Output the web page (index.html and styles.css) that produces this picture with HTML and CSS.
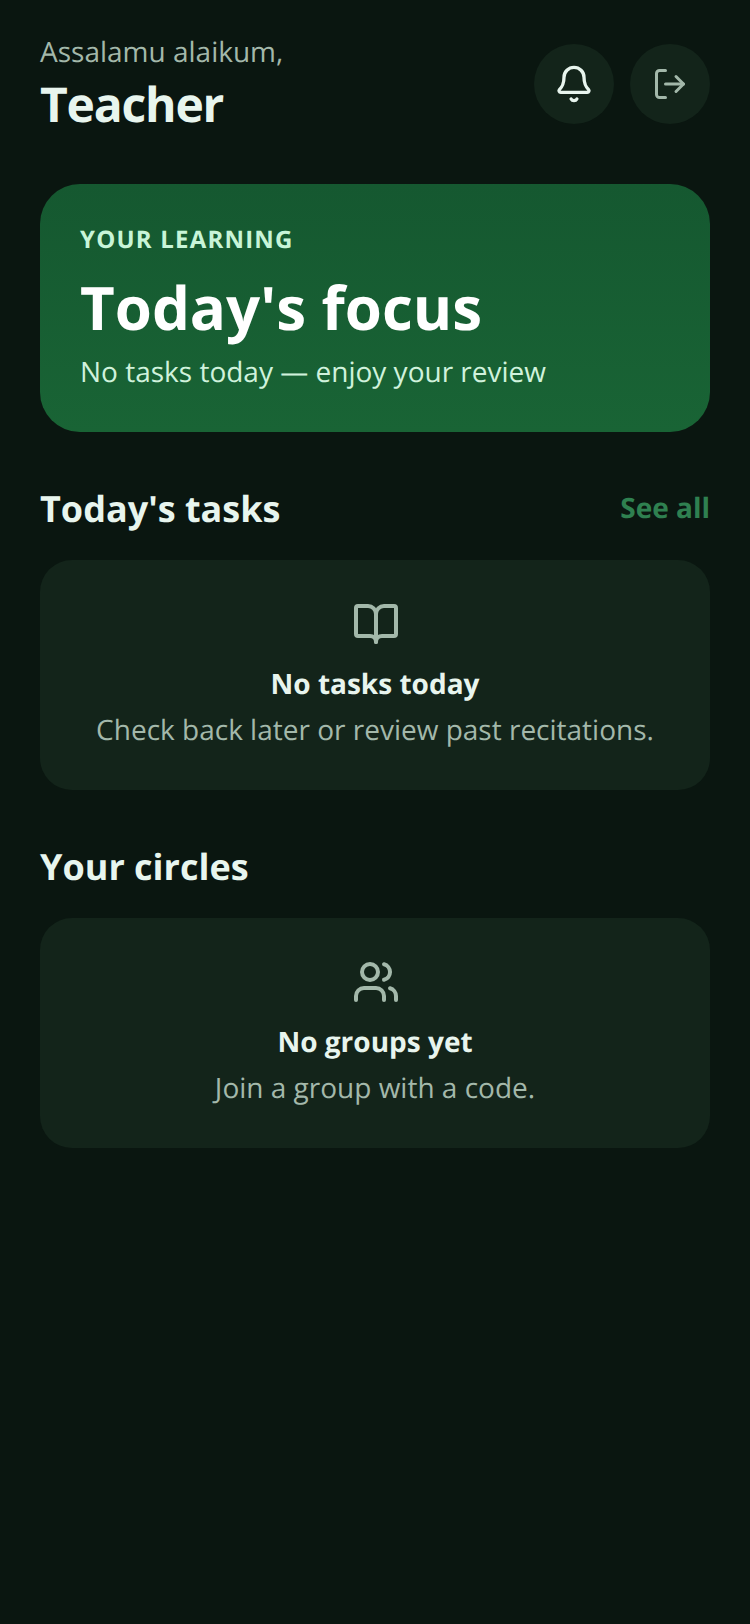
FILE: index.html
```html
<!DOCTYPE html>
<html lang="en">
<head>
  <meta charset="UTF-8">
  <meta name="viewport" content="width=device-width, initial-scale=1.0">
  <title>Home</title>
  <link rel="stylesheet" href="styles.css">
</head>
<body>
  <main class="page">
    <header class="top">
      <div class="hello">
        <p class="greeting">Assalamu alaikum,</p>
        <h1 class="name">Teacher</h1>
      </div>
      <div class="top-actions">
        <button class="round-btn" type="button" aria-label="Notifications">
          <svg class="icon-bell" viewBox="0 0 24 24" fill="none" stroke="currentColor" stroke-width="2" stroke-linecap="round" stroke-linejoin="round">
            <path d="M10.268 21a2 2 0 0 0 3.464 0"/>
            <path d="M3.262 15.326A1 1 0 0 0 4 17h16a1 1 0 0 0 .74-1.673C19.41 13.956 18 12.499 18 8A6 6 0 0 0 6 8c0 4.499-1.411 5.956-2.738 7.326"/>
          </svg>
        </button>
        <button class="round-btn muted" type="button" aria-label="Log out">
          <svg class="icon-door" viewBox="0 0 24 24" fill="none" stroke="currentColor" stroke-width="2" stroke-linecap="round" stroke-linejoin="round">
            <path d="M9 21H5a2 2 0 0 1-2-2V5a2 2 0 0 1 2-2h4"/>
            <path d="M16 17l5-5-5-5"/>
            <path d="M21 12H9"/>
          </svg>
        </button>
      </div>
    </header>

    <section class="focus">
      <p class="focus-label">YOUR LEARNING</p>
      <h2 class="focus-title">Today's focus</h2>
      <p class="focus-text">No tasks today — enjoy your review</p>
    </section>

    <section class="block">
      <div class="block-head">
        <h3>Today's tasks</h3>
        <a class="see-all" href="#">See all</a>
      </div>
      <div class="empty">
        <svg class="empty-icon" viewBox="0 0 24 24" fill="none" stroke="currentColor" stroke-width="2" stroke-linecap="round" stroke-linejoin="round">
          <path d="M12 7v14"/>
          <path d="M3 18a1 1 0 0 1-1-1V4a1 1 0 0 1 1-1h5a4 4 0 0 1 4 4 4 4 0 0 1 4-4h5a1 1 0 0 1 1 1v13a1 1 0 0 1-1 1h-6a3 3 0 0 0-3 3 3 3 0 0 0-3-3z"/>
        </svg>
        <p class="empty-title">No tasks today</p>
        <p class="empty-text">Check back later or review past recitations.</p>
      </div>
    </section>

    <section class="block">
      <div class="block-head">
        <h3>Your circles</h3>
      </div>
      <div class="empty">
        <svg class="empty-icon" viewBox="0 0 24 24" fill="none" stroke="currentColor" stroke-width="2" stroke-linecap="round" stroke-linejoin="round">
          <path d="M16 21v-2a4 4 0 0 0-4-4H6a4 4 0 0 0-4 4v2"/>
          <circle cx="9" cy="7" r="4"/>
          <path d="M22 21v-2a4 4 0 0 0-3-3.87"/>
          <path d="M16 3.13a4 4 0 0 1 0 7.75"/>
        </svg>
        <p class="empty-title">No groups yet</p>
        <p class="empty-text">Join a group with a code.</p>
      </div>
    </section>
  </main>
</body>
</html>
```

FILE: styles.css
```css
* {
  box-sizing: border-box;
}

body {
  margin: 0;
  background-color: #0a1610;
  font-family: "Open Sans", sans-serif;
  color: #e8f5ee;
  text-rendering: geometricPrecision;
}

p, h1, h2, h3 {
  margin: 0;
}

.page {
  min-height: 1624px;
  padding: 32px 40px;
}

.top {
  display: flex;
  justify-content: space-between;
  align-items: center;
  height: 104px;
}

.hello {
  align-self: flex-start;
}

.greeting {
  font-size: 28px;
  line-height: 40px;
  color: #a3b8aa;
}

.name {
  margin-top: 1px;
  font-size: 48px;
  line-height: 64px;
  font-weight: 700;
  letter-spacing: -1.2px;
}

.top-actions {
  display: flex;
  gap: 16px;
}

.round-btn {
  display: flex;
  align-items: center;
  justify-content: center;
  width: 80px;
  height: 80px;
  border: none;
  border-radius: 50%;
  background-color: #13241a;
  color: #e8f5ee;
}

.round-btn.muted {
  color: #a3b8aa;
}

.icon-bell {
  width: 40px;
  height: 40px;
}

.icon-door {
  width: 36px;
  height: 36px;
}

.focus {
  margin-top: 48px;
  padding: 41px 40px 40px;
  border-radius: 40px;
  background: linear-gradient(180deg, #155830, #196435);
}

.focus-label {
  font-size: 24px;
  line-height: 30px;
  font-weight: 700;
  letter-spacing: 1.2px;
  color: #c8f5d8;
}

.focus-title {
  margin-top: 14px;
  font-size: 60px;
  line-height: 76px;
  font-weight: 700;
  color: #fff;
}

.focus-text {
  margin-top: 7px;
  font-size: 28px;
  line-height: 40px;
  color: #d0f2dc;
}

.block {
  margin-top: 48px;
}

.block-head {
  display: flex;
  justify-content: space-between;
  align-items: center;
  margin-bottom: 24px;
}

.block-head h3 {
  padding-top: 2px;
  font-size: 36px;
  line-height: 54px;
  font-weight: 700;
}

.see-all {
  font-size: 28px;
  font-weight: 700;
  color: #2f8050;
  text-decoration: none;
}

.empty {
  display: flex;
  flex-direction: column;
  align-items: center;
  padding: 40px;
  border-radius: 32px;
  background-color: #13241a;
}

.empty-icon {
  width: 48px;
  height: 48px;
  margin-left: 2px;
  color: #a3b8aa;
}

.empty-title {
  margin-top: 16px;
  font-size: 28px;
  line-height: 40px;
  font-weight: 700;
}

.empty-text {
  margin-top: 6px;
  font-size: 28px;
  line-height: 40px;
  color: #a3b8aa;
}
```
